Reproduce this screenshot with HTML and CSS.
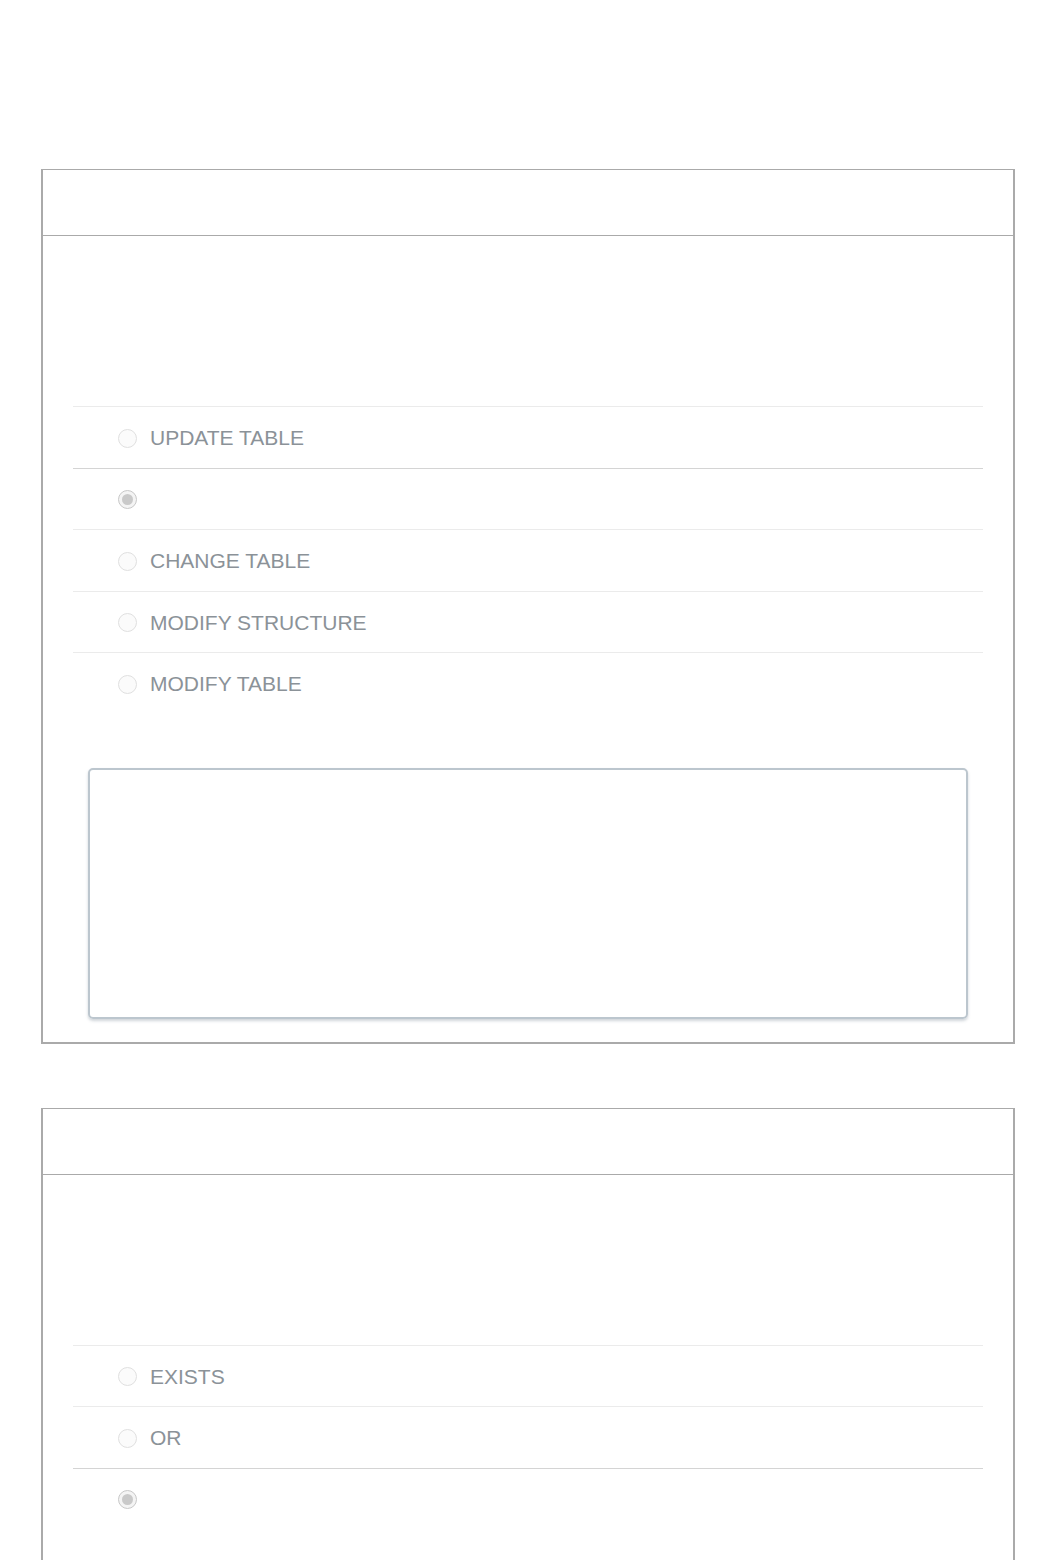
FILE: index.html
```html
<!DOCTYPE html>
<html>
<head>
<meta charset="utf-8">
<link rel="stylesheet" href="styles.css">
</head>
<body>
<div class="page">
  <section class="card">
    <div class="card-header"></div>
    <div class="card-body">
      <div class="question"></div>
      <ul class="options">
        <li class="option"><span class="radio"></span><span class="label">UPDATE TABLE</span></li>
        <li class="option checked"><span class="radio"></span><span class="label"></span></li>
        <li class="option"><span class="radio"></span><span class="label">CHANGE TABLE</span></li>
        <li class="option"><span class="radio"></span><span class="label">MODIFY STRUCTURE</span></li>
        <li class="option"><span class="radio"></span><span class="label">MODIFY TABLE</span></li>
      </ul>
      <div class="answer-box"></div>
    </div>
  </section>
  <section class="card">
    <div class="card-header"></div>
    <div class="card-body">
      <div class="question"></div>
      <ul class="options">
        <li class="option"><span class="radio"></span><span class="label">EXISTS</span></li>
        <li class="option"><span class="radio"></span><span class="label">OR</span></li>
        <li class="option checked"><span class="radio"></span><span class="label"></span></li>
      </ul>
      <div class="answer-box"></div>
    </div>
  </section>
</div>
</body>
</html>
```

FILE: styles.css
```css
html, body {
  margin: 0;
  padding: 0;
  background: #ffffff;
  font-family: "Liberation Sans", Arial, sans-serif;
}

.page {
  padding: 169px 41px 0;
  display: flex;
  flex-direction: column;
  gap: 64px;
}

.card {
  border: 2px solid #aaaaaa;
  border-top-width: 1px;
  background: #fff;
}

.card-header {
  height: 65px;
  border-bottom: 1px solid #aaaaaa;
}

.card-body {
  padding: 30px 30px 23px;
}

.question {
  height: 140px;
}

.options {
  list-style: none;
  margin: 0;
  padding: 0;
}

.option {
  height: 60.5px;
  border-top: 1px solid #ebebeb;
  display: flex;
  align-items: center;
  padding-left: 45px;
  gap: 13px;
}

.option.checked {
  border-top-color: #d4d4d4;
}

.radio {
  width: 17px;
  height: 17px;
  margin-top: 2px;
  border: 1px solid #e0e0e0;
  border-radius: 50%;
  background: #fbfbfb;
  display: flex;
  align-items: center;
  justify-content: center;
  flex: none;
}

.option.checked .radio {
  border-color: #c8c8c8;
  background: #f4f4f4;
}

.option.checked .radio::after {
  content: "";
  width: 11px;
  height: 11px;
  border-radius: 50%;
  background: #c9c9c9;
}

.label {
  font-size: 21px;
  color: #8b9298;
  line-height: 24px;
  padding-top: 2px;
}

.answer-box {
  margin: 54px 15px 0;
  height: 247px;
  border: 2px solid #bcc6ce;
  border-radius: 5px;
  box-shadow: 0 2px 3px rgba(120, 135, 150, 0.35);
}
```
